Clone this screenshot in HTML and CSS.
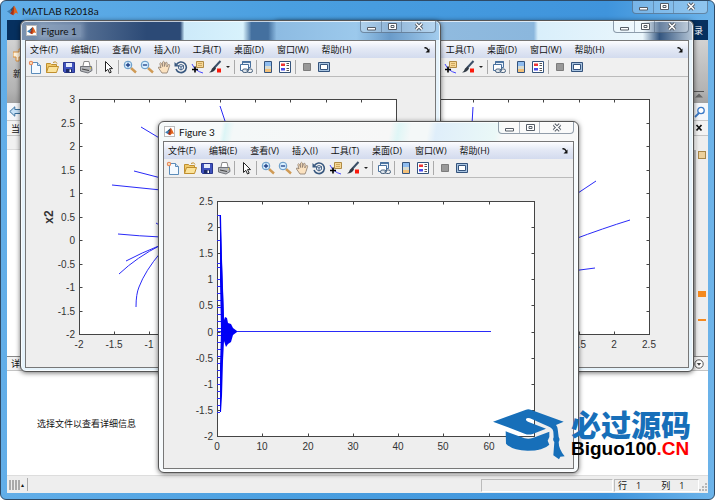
FILE: index.html
```
<!DOCTYPE html>
<html lang="zh-CN">
<head>
  <meta charset="UTF-8">
  <title>MATLAB R2018a</title>
  <link rel="stylesheet" href="styles.css">
</head>
<body>

<!-- icons -->
<svg class="sprite" width="0" height="0">
  <symbol id="i-matlab" viewBox="0 0 14 14">
    <path d="M0 8L4 6 7 9 4 11z" fill="#3d7fb5"/>
    <path d="M4 6L9 1 7 9z" fill="#27506e"/>
    <path d="M9 1Q11 3 14 11L11 10 8 13 6 9Q8 5 9 1z" fill="#e2641c"/>
    <path d="M9 1Q9 8 8 13L4 11Q7 8 9 1z" fill="#a3301a"/>
  </symbol>
  <symbol id="i-new" viewBox="0 0 14 14">
    <path d="M3.500 2.500h6l3 3v8h-9z" fill="#f4faff" stroke="#5b8cba"/>
    <path d="M9.500 2.500v3h3" fill="#cfe2f3" stroke="#5b8cba"/>
    <circle cx="3" cy="3" r="2.200" fill="#e88a5c"/><circle cx="3" cy="3" r="1" fill="#fff0c8"/>
  </symbol>
  <symbol id="i-open" viewBox="0 0 14 14">
    <path d="M1.500 12.500v-9h4l1 1h5v3" fill="#f0c96a" stroke="#c08f2e"/>
    <path d="M1.500 12.500l2-6h10l-2 6z" fill="#fbe39b" stroke="#c08f2e"/>
    <path d="M8 2.500q3-2 4 1" fill="none" stroke="#c08f2e"/>
  </symbol>
  <symbol id="i-save" viewBox="0 0 14 14">
    <path d="M1.500 2.500h11v10h-10l-1-1z" fill="#3f52bd" stroke="#29368e"/>
    <path d="M4 3h6v4H4z" fill="#e4ebfb"/><path d="M4 9h6v3.500H4z" fill="#1d2b66"/><path d="M7.500 9.500h1.500v2.500H7.500z" fill="#fff"/>
  </symbol>
  <symbol id="i-print" viewBox="0 0 14 14">
    <path d="M4 6l1-4.500h5L11 6" fill="#fff" stroke="#8a8a8a"/>
    <path d="M1.500 6.500h11l.5 4-4 2.500-7.500-2z" fill="#b4b6ba" stroke="#707379"/>
    <path d="M3 9l7 1.500" stroke="#444"/><path d="M11 8h1" stroke="#e7c83b" stroke-width="1.500"/>
  </symbol>
  <symbol id="i-arrow" viewBox="0 0 14 14">
    <path d="M4.500 1.500v10l2.300-2.200 1.700 3.700 1.700-.8-1.700-3.600h3z" fill="#fff" stroke="#222"/>
  </symbol>
  <symbol id="i-zoomin" viewBox="0 0 14 14">
    <path d="M8 8l5 4.500" stroke="#cf9a55" stroke-width="2.400"/>
    <circle cx="5" cy="5" r="3.800" fill="#d8efff" stroke="#5f95c4"/>
    <path d="M5 2.800v4.400M2.800 5h4.400" stroke="#1d3f86" stroke-width="1.300"/>
  </symbol>
  <symbol id="i-zoomout" viewBox="0 0 14 14">
    <path d="M8 8l5 4.500" stroke="#cf9a55" stroke-width="2.400"/>
    <circle cx="5" cy="5" r="3.800" fill="#d8efff" stroke="#5f95c4"/>
    <path d="M2.800 5h4.400" stroke="#1d3f86" stroke-width="1.300"/>
  </symbol>
  <symbol id="i-hand" viewBox="0 0 14 14">
    <path d="M5 13L1.500 8Q1 6.500 3 7.200L4 8 2.800 3.500Q3.500 2 4.600 3.500L5.600 6.500V2Q6.500.6 7.400 2V6.500L8.700 2.500Q9.800 1.700 10.200 3L9.800 7 11.500 4.500Q12.700 4.200 12.600 5.500L11 10.500 10 13z" fill="#fbe2c0" stroke="#8b7a6a" stroke-width=".8"/>
  </symbol>
  <symbol id="i-rotate" viewBox="0 0 14 14">
    <path d="M2.500 4.500A5.300 5.300 0 1 1 2 9" fill="none" stroke="#38587f" stroke-width="1.600"/>
    <path d="M.5 2v4.500H5z" fill="#38587f"/>
    <path d="M4.500 5.500L7 4.500 9.500 5.500V8.500L7 10 4.500 8.500zM7 7v3M4.500 5.500L7 7 9.500 5.500" fill="#e7eef7" stroke="#38587f" stroke-width=".9"/>
  </symbol>
  <symbol id="i-cursor" viewBox="0 0 14 14">
    <path d="M5.500 1.500h7v6h-7z" fill="#f6d795" stroke="#b08b45"/><path d="M7 3.500h4M7 5.500h4" stroke="#c49a50" stroke-width=".8"/>
    <path d="M1 4Q4 11 12 13" fill="none" stroke="#4646ff"/>
    <path d="M4 6.500v6M1 9.500h6" stroke="#000" stroke-width="1.600"/>
  </symbol>
  <symbol id="i-brush" viewBox="0 0 14 14">
    <path d="M12.500 1L6 8" stroke="#3b5068" stroke-width="2"/>
    <path d="M6.500 6.500L8 8.500Q6 12.500 1 12.500 3.500 11 4 8.500z" fill="#303a45"/>
    <path d="M9 8.500h4v4H9z" fill="#fb1a0c"/>
  </symbol>
  <symbol id="i-link" viewBox="0 0 14 14">
    <path d="M3.500 1.500h8v6h-8z" fill="#e8f1fb" stroke="#49719e"/><path d="M3 2.200h9" stroke="#49719e" stroke-width="1.500"/>
    <path d="M1.500 4.500h8v6h-8z" fill="#fff" stroke="#49719e"/>
    <rect x="3.500" y="9" width="5.500" height="3.500" rx="1.700" fill="#dce3ea" stroke="#49627e"/><rect x="8" y="9" width="5.500" height="3.500" rx="1.700" fill="none" stroke="#49627e"/>
  </symbol>
  <symbol id="i-colorbar" viewBox="0 0 14 14">
    <path d="M3.500 1.500h7v11h-7z" fill="#fff" stroke="#34537c"/>
    <path d="M4 2h6v4H4z" fill="#8fbdf0"/><path d="M4 6h6v3H4z" fill="#d8dcd2"/><path d="M4 9h6v3H4z" fill="#f2c079"/>
  </symbol>
  <symbol id="i-legend" viewBox="0 0 14 14">
    <path d="M1.500 1.500h11v11h-11z" fill="#fff" stroke="#34537c"/>
    <path d="M3 3.500h4v2.500H3z" fill="#ef3434"/><path d="M3 8h4v2.500H3z" fill="#4a4ae8"/>
    <path d="M8.500 3.500H11M8.500 5.500H11M8.500 8.500H11M8.500 10.500H11" stroke="#555"/>
  </symbol>
  <symbol id="i-hide" viewBox="0 0 14 14"><path d="M3.500 3.500h7v7h-7z" fill="#999" stroke="#7c7c7c"/></symbol>
  <symbol id="i-dock" viewBox="0 0 14 14">
    <path d="M1.500 2.500h11v9h-11z" fill="#a9c4e0" stroke="#34537c"/>
    <path d="M3.500 4.500h7v5h-7z" fill="#fff" stroke="#34537c"/>
  </symbol>
  <symbol id="i-min" viewBox="0 0 12 12"><path d="M2.500 6.500h8v2.500h-8z" fill="#fff" stroke="#555c66"/></symbol>
  <symbol id="i-max" viewBox="0 0 12 12"><path d="M2.500 2.500h8v6h-8z" fill="#fff" stroke="#555c66"/><path d="M5 4.500h3v2H5z" fill="none" stroke="#555c66"/></symbol>
  <symbol id="i-close" viewBox="0 0 12 12">
    <path d="M3 2.500l6 6M9 2.500l-6 6" stroke="#555c66" stroke-width="3.400"/><path d="M3 2.500l6 6M9 2.500l-6 6" stroke="#fff" stroke-width="1.500"/>
  </symbol>
  <symbol id="i-undock" viewBox="0 0 8 8"><path d="M1.500 2q2-1 4 2.500" fill="none" stroke="#111" stroke-width="1.400"/><path d="M6.500 2.500v4h-4z" fill="#111"/></symbol>
</svg>

<!-- main window -->
<div class="matlab">
  <header class="titlebar">
    <svg class="app-icon"><use href="#i-matlab"/></svg>
    <span>MATLAB R2018a</span>
    <div class="caption">
      <button aria-label="最小化"><svg><use href="#i-min"/></svg></button>
      <button aria-label="最大化"><svg><use href="#i-max"/></svg></button>
      <button class="close" aria-label="关闭"><svg><use href="#i-close"/></svg></button>
    </div>
  </header>

  <main class="client">
    <div class="tabs">录</div>
    <div class="ribbon">
      <div class="new-item">
        <svg width="12" height="14" viewBox="0 0 12 14"><path d="M0 4h6V1h3v3h3v5H6v4H3V9H0z" fill="#fff2dc" stroke="#d98f3c"/></svg>
        <span>新</span>
      </div>
      <svg width="10" height="8" viewBox="0 0 10 8"><path d="M0 .5h10" stroke="#555"/><path d="M5 2.500l4 4H1z" fill="#666"/></svg>
    </div>
    <div class="address">
      <svg width="13" height="11" viewBox="0 0 13 11"><path d="M.8 5.500l5-4.700V3.500H12v4H5.800v2.700z" fill="#c7e2f8" stroke="#39719f"/></svg>
      <svg width="12" height="12" viewBox="0 0 12 12"><circle cx="7" cy="4.500" r="3.200" fill="#fff" stroke="#3a7ac8" stroke-width="1.300"/><path d="M5 7l-4 4" stroke="#3a7ac8" stroke-width="1.800"/></svg>
    </div>
    <div class="panel-head"><span>当前文件夹</span><svg width="9" height="8" viewBox="0 0 9 8"><path d="M1.500 1l5 5.500M6.500 1l-5 5.500" stroke="#111" stroke-width="1.700"/></svg></div>
    <div class="workspace">
      <div class="folder"><div class="folder-head"></div></div>
      <div class="scrollbar"></div>
      <div class="markers">
        <i class="note"></i>
        <i class="warn"></i>
        <i class="warn thin"></i>
      </div>
    </div>
    <div class="panel-head details-head"><span>详细信息</span><svg width="10" height="10" viewBox="0 0 10 10"><circle cx="5" cy="5" r="4.200" fill="#fff" stroke="#555"/><path d="M2.800 4h4.400L5 6.800z" fill="#444"/></svg></div>
    <div class="details">选择文件以查看详细信息</div>
    <footer class="status">
      <div class="grip"><b></b><b></b><b></b><b></b><small>▴</small></div>
      <div class="cell message"></div>
      <div class="cell position"><span>行</span><span>1</span><span>列</span><span>1</span></div>
      <svg width="9" height="16" viewBox="0 0 9 16"><path d="M7 7v2M7 10v2M7 13v2M4 10v2M4 13v2M1 13v2" stroke="#a5a5a5" stroke-width="1.500"/></svg>
    </footer>
  </main>
</div>

<!-- figure windows, filled from the template -->
<section class="figure fig2" id="fig2"></section>
<section class="figure fig1" id="fig1"></section>
<section class="figure fig3" id="fig3"></section>

<template id="figureTpl">
  <header class="fig-title">
    <svg class="app-icon"><use href="#i-matlab"/></svg>
    <span class="fig-name"></span>
    <div class="caption">
      <button aria-label="最小化"><svg><use href="#i-min"/></svg></button>
      <button aria-label="最大化"><svg><use href="#i-max"/></svg></button>
      <button class="close" aria-label="关闭"><svg><use href="#i-close"/></svg></button>
    </div>
  </header>
  <div class="fig-body">
    <nav class="menu">
      <button>文件(F)</button>
      <button>编辑(E)</button>
      <button>查看(V)</button>
      <button>插入(I)</button>
      <button>工具(T)</button>
      <button>桌面(D)</button>
      <button>窗口(W)</button>
      <button>帮助(H)</button>
      <svg class="undock"><use href="#i-undock"/></svg>
    </nav>
    <div class="toolbar">
      <button aria-label="新建"><svg><use href="#i-new"/></svg></button>
      <button aria-label="打开"><svg><use href="#i-open"/></svg></button>
      <button aria-label="保存"><svg><use href="#i-save"/></svg></button>
      <button aria-label="打印"><svg><use href="#i-print"/></svg></button>
      <i></i>
      <button aria-label="编辑绘图"><svg><use href="#i-arrow"/></svg></button>
      <i></i>
      <button aria-label="放大"><svg><use href="#i-zoomin"/></svg></button>
      <button aria-label="缩小"><svg><use href="#i-zoomout"/></svg></button>
      <button aria-label="平移"><svg><use href="#i-hand"/></svg></button>
      <button aria-label="三维旋转"><svg><use href="#i-rotate"/></svg></button>
      <button aria-label="数据游标"><svg><use href="#i-cursor"/></svg></button>
      <button aria-label="刷亮"><svg><use href="#i-brush"/></svg></button>
      <button class="drop" aria-label="更多"></button>
      <i></i>
      <button aria-label="链接绘图"><svg><use href="#i-link"/></svg></button>
      <i></i>
      <button aria-label="颜色栏"><svg><use href="#i-colorbar"/></svg></button>
      <button aria-label="图例"><svg><use href="#i-legend"/></svg></button>
      <i></i>
      <button aria-label="隐藏绘图工具"><svg><use href="#i-hide"/></svg></button>
      <button aria-label="显示绘图工具"><svg><use href="#i-dock"/></svg></button>
    </div>
    <svg class="plot" viewBox="0 0 409 290"></svg>
  </div>
</template>

<!-- logo -->
<div class="logo">
  <svg class="hat" viewBox="0 0 240 180">
    <g fill="#176fb9">
      <path d="M9 50L108 14Q115 11 124 15L221 50 198 60Q203 66 203 72L206 96Q211 103 206 111 206 132 224 154L211 155 207 163 190 151 193 111Q187 105 191 97L190 80Q188 69 174 64L120 40Q111 37 108 42 107 47 114 50L168 71 128 87Q116 91 104 86z"/>
      <path d="M47 79L104 100Q116 103 128 99L178 80 178 96 173 107 178 119Q160 137 113 137 66 136 48 116z"/>
    </g>
  </svg>
  <div class="logo-text">
    <div class="cn">必过源码</div>
    <div class="en">Biguo100<span>.CN</span></div>
  </div>
</div>

<script src="script.js"></script>
</body>
</html>
```

FILE: styles.css
```
* {
  box-sizing: border-box;
}
body {
  margin: 0;
  font-family: "Open Sans", "Noto Sans CJK SC", sans-serif;
  font-size: 9px;
  color: #111;
  overflow: hidden;
}
button {
  padding: 0;
  border: 0;
  background: none;
  font: inherit;
  color: inherit;
}
svg {
  display: block;
}
.sprite {
  position: absolute;
}

/* main window */
.matlab {
  height: 100vh;
  display: flex;
  flex-direction: column;
  padding: 0 6px 6px;
  border: 1px solid #2e4a66;
  border-radius: 6px;
  background: linear-gradient(90deg, #62aee8, #4a9fe0 40%, #3f94dc 85%, #6db4ea);
}
.titlebar {
  height: 19px;
  display: flex;
  align-items: center;
  gap: 4px;
  font-family: Lato, sans-serif;
  font-size: 10px;
}
.app-icon {
  width: 11px;
  height: 11px;
}
.caption {
  align-self: flex-start;
  margin-left: auto;
  display: flex;
  height: 13px;
  border: 1px solid rgba(60, 80, 105, 0.55);
  border-top: 0;
  border-radius: 0 0 4px 4px;
  background: rgba(255, 255, 255, 0.25);
}
.caption button {
  width: 20px;
  display: flex;
  align-items: center;
  justify-content: center;
}
.caption button + button {
  border-left: 1px solid rgba(60, 80, 105, 0.4);
}
.caption .close {
  width: 34px;
}
.caption svg {
  width: 12px;
  height: 12px;
}
.client {
  flex: 1;
  min-height: 0;
  display: flex;
  flex-direction: column;
  background: #fff;
}
.tabs {
  height: 20px;
  padding: 0 5px;
  line-height: 22px;
  text-align: right;
  background: #06305f;
  color: #fff;
}
.ribbon {
  height: 63px;
  display: flex;
  justify-content: space-between;
  align-items: flex-end;
  padding: 0 4px 4px 6px;
  background: linear-gradient(#d2d2d2, #b3b3b3 80%, #a2a2a2);
}
.new-item {
  align-self: flex-start;
  padding-top: 8px;
  display: flex;
  flex-direction: column;
  gap: 5px;
}
.address {
  height: 18px;
  display: flex;
  justify-content: space-between;
  align-items: center;
  padding: 0 2px;
  background: #f4f7fb;
  border-bottom: 1px solid #c8c8c8;
}
.panel-head {
  height: 15px;
  display: flex;
  justify-content: space-between;
  align-items: center;
  padding: 0 4px;
  background: #f3f3f3;
  border-bottom: 1px solid #c4c4c4;
}
.workspace {
  flex: 1;
  display: flex;
  background: #fff;
}
.folder {
  flex: 1;
}
.folder-head {
  height: 14px;
  background: #f1f1f1;
  border-bottom: 1px solid #ddd;
}
.scrollbar {
  width: 4px;
  margin-top: 14px;
  background: #bdbdbd;
}
.markers {
  width: 12px;
  padding-top: 15px;
  background: #eee;
}
.markers i {
  display: block;
  width: 8px;
  margin-left: 2px;
}
.note {
  height: 8px;
  border: 1px solid #a8874a;
  background: #ecd09b;
}
.warn {
  height: 6px;
  margin-top: 132px;
  background: #f58a1f;
}
.warn.thin {
  height: 2px;
  margin-top: 22px;
}
.details-head {
  border-top: 1px solid #888;
}
.details {
  height: 104px;
  padding: 0 30px;
  line-height: 106px;
}
.status {
  height: 18px;
  display: flex;
  align-items: stretch;
  background: #eee;
  border-top: 1px solid #ddd;
}
.grip {
  display: flex;
  align-items: center;
  gap: 1px;
  width: 21px;
  margin: 2px 0;
  padding-left: 2px;
  border-right: 1px solid #aaa;
}
.grip b {
  width: 2px;
  height: 10px;
  background: #aaa;
}
.grip small {
  font-size: 6px;
}
.cell {
  margin: 3px 0 1px;
  border: 1px solid #bbb;
  border-right-color: #fff;
  border-bottom-color: #fff;
}
.message {
  width: 132px;
  margin-left: auto;
}
.position {
  width: 85px;
  margin-left: 1px;
  padding-left: 3px;
  display: flex;
  align-items: center;
  gap: 9px;
}
.position span:nth-child(2) {
  margin-right: 11px;
}

/* figure windows */
.figure {
  position: absolute;
  width: 421px;
  padding: 0 5px 4px;
  border: 1px solid #555;
  border-radius: 6px;
  background: linear-gradient(90deg, #e4f4fc, #fff 2%, #fff 98%, #dbeefa);
  box-shadow: 0 1px 5px rgba(0, 0, 0, 0.55), inset 0 0 0 1px rgba(255, 255, 255, 0.7);
}
.fig1 {
  left: 20px;
  top: 20px;
  background: linear-gradient(90deg, #7c93b0, #2c4a76 30%, #2c4a76 38%, #cdeafa 39%, #d8f2fc 53%, #44709f 55%, #44709f 59%, #8dbbe2 61%, #9cc9ec 80%, #6a9bc9 88%, #a4cdee) top / 100% 19px no-repeat, #e6f3fb;
}
.fig2 {
  left: 273px;
  top: 20px;
  background: linear-gradient(90deg, #98c0e2, #8bb7dd 62%, #d9effb 63%, #eaf6fc 88%, #33557f 92%, #b8c8d8) top / 100% 19px no-repeat, #e6f3fb;
}
.fig3 {
  left: 158px;
  top: 121px;
  background: linear-gradient(100deg, #f6fafa 15%, #dcf5f6 16%, #f4f8f8 18%, #f7f7f7 55%, #dff6f6 57%, #f4f8f8 60%, #f4f8f8 64%, #dfeefa 66%, #eaf8f7 80%, #f8f8f8 82%) top / 100% 19px no-repeat, #f7fbfd;
}
.fig-title {
  height: 19px;
  display: flex;
  align-items: center;
  gap: 4px;
  font-family: Lato, sans-serif;
  font-size: 10px;
}
.fig-title .app-icon {
  background: #fff;
  border: 1px solid #bbb;
}
.fig-title .caption {
  height: 12px;
  margin-right: -1px;
}
.fig1 .fig-name {
  padding-right: 4px;
  background: rgba(190, 205, 225, 0.35);
  box-shadow: 0 0 5px 3px rgba(190, 205, 225, 0.35);
}
.fig-body {
  border: 1px solid #777;
  margin: 0 -1px -1px;
  background: #eee;
}
.menu {
  height: 17px;
  display: flex;
  align-items: center;
  gap: 13px;
  padding: 0 4px;
  background: linear-gradient(#fdfdff, #e4e9f5 45%, #d3dbee);
}
.menu button {
  white-space: nowrap;
  line-height: 16px;
}
.undock {
  width: 8px;
  height: 8px;
  margin-left: auto;
}
.toolbar {
  height: 19px;
  display: flex;
  align-items: center;
  background: #f0f0f0;
  border-bottom: 1px solid #bbb;
}
.toolbar button {
  width: 17px;
  display: flex;
  justify-content: center;
}
.toolbar svg {
  width: 14px;
  height: 14px;
}
.toolbar i {
  width: 1px;
  height: 14px;
  margin: 0 2px;
  background: #aaa;
}
.toolbar .drop {
  width: 9px;
}
.drop::before {
  content: "";
  border: 2px solid transparent;
  border-top-color: #222;
  border-bottom: 0;
}
.plot {
  width: 100%;
  font-family: "Liberation Sans", Arial, sans-serif;
  font-size: 10px;
  fill: #333;
}
.plot .box {
  fill: #fff;
  stroke: #444;
}
.plot .ticks {
  stroke: #444;
}
.plot .curve {
  fill: none;
  stroke: #2a2af8;
}
.plot .blob {
  fill: #0000f5;
}
.plot .axis-name {
  font-size: 12px;
  font-weight: bold;
}

/* logo */
.logo {
  position: absolute;
  left: 490px;
  top: 405px;
  display: flex;
  gap: 1px;
}
.hat {
  width: 80px;
  height: 60px;
}
.logo-text {
  white-space: nowrap;
}
.cn {
  height: 34px;
  font: 900 30px/36px "Noto Sans CJK SC", sans-serif;
  color: #176fb9;
}
.en {
  font: bold 19px/20px "Liberation Sans", Arial, sans-serif;
  color: #000;
}
.en span {
  color: #f00;
}
```

FILE: script.js
```
// axes box inside the plot area
const LEFT = 53, W = 317, H = 235;

const figures = [
  {
    id: 'fig1', name: 'Figure 1', top: 22,
    x: [-2, 2.5, 0.5], y: [-2, 3, 0.5], yName: 'x2',
    curves: ['M62 28L82 40', 'M55 72L82 79', 'M33 86L82 91', 'M77 124L82 127',
      'M39 135Q60 137 82 138', 'M47 162Q62 154 82 146', 'M40 175Q58 158 82 146',
      'M57 208Q57 195 60 188Q66 172 82 153', 'M141 7L147 25']
  },
  {
    id: 'fig2', name: 'Figure 2', top: 22,
    x: [-2, 2.5, 0.5], y: [-2, 3, 0.5],
    curves: ['M141 8L140 25', 'M240 98L264 82', 'M240 141Q272 129 298 121', 'M240 172L263 169']
  },
  {
    id: 'fig3', name: 'Figure 3', top: 23,
    x: [0, 70, 10], y: [-2, 2.5, 0.5],
    curves: ['M0 14.500H3L7 130M0 39.500H3M0 62.500H3M0 66.500H3M0 130.500H274M0 211.500H3'],
    // settling part of the response
    blob: 'M3 14L4 14 5 62 7 119 8 116 10 117 11 122 14 123 16 127 20 130 20 131 16 134 14 141 11 143 9 146 7 140 6 160 5 195 4 211 3 211 3 165 4 130 3 80z'
  }
];

function drawPlot(svg, f) {
  const [x0, x1, dx] = f.x;
  const [y0, y1, dy] = f.y;
  let ticks = '', labels = '';

  for (let v = x0; v <= x1; v += dx) {
    const px = Math.round((v - x0) / (x1 - x0) * W);
    ticks += `M${px} ${H}v-3M${px} 0v3`;
    labels += `<text x="${px}" y="${H + 14}" text-anchor="middle">${v}</text>`;
  }
  for (let v = y0; v <= y1; v += dy) {
    const py = Math.round((y1 - v) / (y1 - y0) * H);
    ticks += `M0 ${py}h3M${W} ${py}h-3`;
    labels += `<text x="-4" y="${py + 4}" text-anchor="end">${v}</text>`;
  }

  let curves = f.curves.map(d => `<path class="curve" d="${d}"/>`).join('');
  if (f.blob) {
    let bars = '';
    for (let y = 78; y < 210; y += 7) bars += `M0 ${y}.5h4`;
    curves += `<path class="curve" d="${bars}"/><path class="blob" d="${f.blob}"/>`;
  }
  const yName = f.yName
    ? `<text class="axis-name" text-anchor="middle" transform="translate(-26 118) rotate(-90)">${f.yName}</text>` : '';

  svg.innerHTML = `<g transform="translate(${LEFT} ${f.top})">
    <rect class="box" x=".5" y=".5" width="${W}" height="${H}"/>
    <path class="ticks" transform="translate(.5 .5)" d="${ticks}"/>
    ${curves}${labels}${yName}
  </g>`;
}

figures.forEach(f => {
  const win = document.getElementById(f.id);
  win.appendChild(document.getElementById('figureTpl').content.cloneNode(true));
  win.querySelector('.fig-name').textContent = f.name;
  drawPlot(win.querySelector('.plot'), f);
});
```
